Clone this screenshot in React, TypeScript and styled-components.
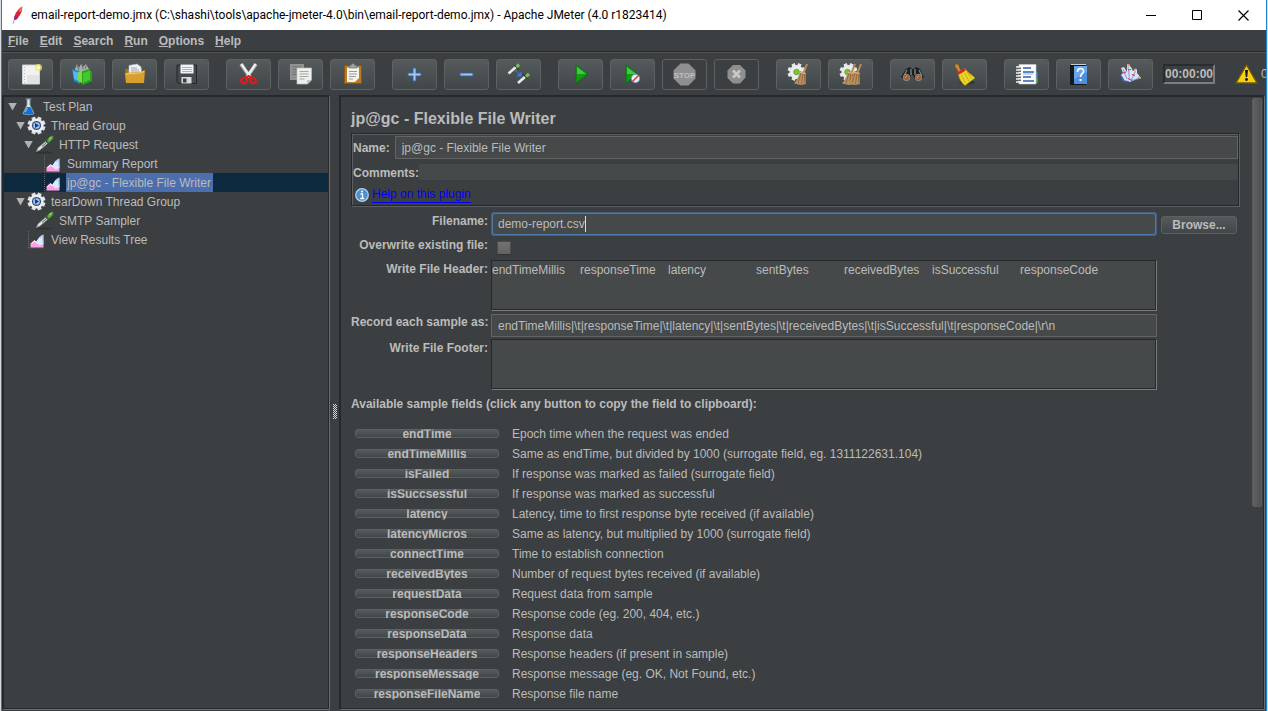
import React, { ReactNode } from 'react';
import styled, { createGlobalStyle, css } from 'styled-components';

const color = {
  panel: '#3c3f41',
  field: '#45494a',
  text: '#bbbbbb',
  dark: '#26292b',
  light: '#6b6e70',
  frame: '#1883d7',
};

const GlobalStyle = createGlobalStyle`
  * { box-sizing: border-box; }
  body {
    margin: 0;
    background: #d3dce2;
    color: ${color.text};
    font: 12px/16px "Liberation Sans", Arial, sans-serif;
  }
  button, input, textarea { font: inherit; color: inherit; margin: 0; padding: 0; }
`;

const Desktop = styled.div`
  height: 100vh;
  padding: 0 1px;
  display: flex;
`;

const AppWindow = styled.div`
  flex: 1;
  min-width: 0;
  display: flex;
  flex-direction: column;
  background: ${color.panel};
  border: solid ${color.frame};
  border-width: 0 1px;
`;

const TitleBar = styled.header`
  flex: none;
  height: 30px;
  padding-left: 8px;
  display: flex;
  align-items: center;
  background: #fff;
  color: #000;
`;

const WindowTitle = styled.h1`
  flex: 1;
  margin: 0 0 0 5px;
  font: 12px/20px Roboto, "Noto Sans", sans-serif;
  white-space: nowrap;
  overflow: hidden;
`;

const WindowButton = styled.button`
  width: 46px;
  height: 29px;
  border: 0;
  background: none;
  display: flex;
  align-items: center;
  justify-content: center;
`;

const MenuBar = styled.nav`
  flex: none;
  height: 22px;
  padding-left: 6px;
  display: flex;
  align-items: center;
  gap: 11px;
  border-bottom: 1px solid ${color.dark};
`;

const MenuItem = styled.button`
  border: 0;
  background: none;
  font-weight: bold;
`;

const ToolBar = styled.div`
  flex: none;
  height: 43px;
  padding: 0 0 0 6px;
  display: flex;
  align-items: center;
  gap: 17px;
  overflow: hidden;
  border-top: 1px solid #555;
`;

const ToolGroup = styled.div`
  flex: none;
  display: flex;
  gap: 7px;
`;

const raised = css`
  border: 1px solid #5e6162;
  background: linear-gradient(#555a5c, #414648);
`;

const ToolButton = styled.button`
  width: 45px;
  height: 31px;
  border-radius: 3px;
  display: flex;
  align-items: center;
  justify-content: center;
  ${raised}
  &:disabled { background: none; }
`;

const Timer = styled.output`
  flex: none;
  width: 52px;
  height: 20px;
  margin-left: -7px;
  border: 2px solid;
  border-color: #2a2c2e #7b7e80 #7b7e80 #2a2c2e;
  font-weight: bold;
  text-align: center;
`;

const LogCounter = styled.div`
  flex: none;
  margin-left: 3px;
  display: flex;
  align-items: center;
  gap: 3px;
`;

const Workspace = styled.div`
  flex: 1;
  min-height: 0;
  margin: 0 1px 1px 0;
  display: flex;
`;

const TreePane = styled.aside`
  flex: none;
  width: 328px;
  border: solid ${color.dark};
  border-width: 2px 0 0 2px;
  border-right: 1px solid ${color.light};
  border-bottom: 1px solid ${color.light};
  box-shadow: inset -1px -1px 0 ${color.dark};
  padding-right: 1px;
`;

const TreeRow = styled.div<{ $level: number; $selected?: boolean }>`
  height: 19px;
  padding-left: ${(p) => 4 + p.$level * 8}px;
  display: flex;
  align-items: center;
  background: ${(p) => (p.$selected ? '#0d293e' : 'none')};
`;

const Arrow = styled.span<{ $open?: boolean }>`
  width: 9px;
  height: 8px;
  margin-right: 2px;
  background: ${(p) => (p.$open ? '#afb1b3' : 'none')};
  clip-path: polygon(0 0, 100% 0, 50% 100%);
`;

const TreeIcon = styled.span`
  width: 20px;
  height: 19px;
  margin-right: 3px;
`;

const TreeLabel = styled.span<{ $selected?: boolean }>`
  height: 19px;
  line-height: 21px;
  padding: 0 2px 0 1px;
  background: ${(p) => (p.$selected ? '#4b6eaf' : 'none')};
`;

const Splitter = styled.div`
  flex: none;
  width: 9px;
  padding-top: 18px;
  display: flex;
  align-items: center;
  justify-content: center;
`;

const EditorPane = styled.main`
  flex: 1;
  min-width: 0;
  display: flex;
  border: solid ${color.dark};
  border-width: 2px 0 0 2px;
  border-right: 1px solid ${color.light};
  border-bottom: 1px solid ${color.light};
  box-shadow: inset -1px -1px 0 ${color.dark};
  overflow: hidden;
`;

const EditorBody = styled.div`
  flex: 1;
  min-width: 0;
  padding: 12px 12px 0 10px;
`;

const ScrollBar = styled.div`
  flex: none;
  width: 12px;
  padding-top: 1px;
`;

const ScrollThumb = styled.div`
  width: 10px;
  height: 67%;
  border-radius: 2px;
  border: 1px solid #5b5b5b;
  background: linear-gradient(90deg, #616161, #505050);
`;

const PaneTitle = styled.h2`
  margin: 0 0 4px;
  font-size: 16px;
  line-height: 20px;
`;

const Etched = styled.section`
  margin: 0 1px 6px 0;
  padding: 2px 0 2px 1px;
  border: 1px solid ${color.dark};
  box-shadow: 1px 1px 0 #5d6062, inset 1px 1px 0 #5d6062;
  display: flex;
  flex-direction: column;
`;

const NameRow = styled.div`
  display: flex;
  align-items: center;
  gap: 5px;
  margin-bottom: 5px;
`;

const CommentsRow = styled.div`
  height: 16px;
  display: flex;
  line-height: 18px;
  margin-bottom: 7px;
`;

const BoldLabel = styled.label`
  font-weight: bold;
`;

const TextInput = styled.input`
  flex: 1;
  align-self: end;
  min-width: 0;
  width: 100%;
  height: 23px;
  padding: 0 6px;
  border: 1px solid #646464;
  background: ${color.field};
`;

const FlatInput = styled.input`
  flex: 1;
  min-width: 0;
  height: 16px;
  border: 0;
  background: ${color.field};
`;

const HelpRow = styled.div`
  padding-left: 2px;
  display: flex;
  align-items: center;
  gap: 3px;
`;

const HelpLink = styled.a`
  color: #0000ff;
  line-height: 15px;
  text-decoration: none;
  border-bottom: 1px solid #0000ff;
`;

const Form = styled.form`
  display: grid;
  grid-template-columns: 137px 1fr 80px;
  grid-template-rows: 24px 20px 51px 24px 51px;
  gap: 2px 3px;
`;

const FormLabel = styled.label<{ $compact?: boolean }>`
  grid-column: 1;
  font-weight: bold;
  line-height: ${(p) => (p.$compact ? 15 : 19)}px;
  text-align: right;
  white-space: nowrap;
`;

const FocusedField = styled.div`
  height: 24px;
  padding-left: 5px;
  display: flex;
  align-items: center;
  border: 2px solid #4b7bab;
  border-radius: 4px;
  outline: 1px solid #41607f;
  outline-offset: -1px;
  background: ${color.field};
`;

const GrowingInput = styled.input`
  field-sizing: content;
  border: 0;
  outline: 0;
  background: none;
`;

const Caret = styled.span`
  width: 1px;
  height: 16px;
  background: #dcdcdc;
`;

const BrowseButton = styled.button`
  height: 18px;
  margin: 4px 3px 0 1px;
  border-radius: 3px;
  font-weight: bold;
  line-height: 14px;
  ${raised}
`;

const CheckBox = styled.input`
  appearance: none;
  width: 14px;
  height: 14px;
  margin: 3px 0 3px 6px;
  border: 1px solid #4b4b4b;
  border-bottom-color: #2c2e30;
  border-radius: 1px;
  background: linear-gradient(#717171, #626262);
`;

const TextArea = styled.textarea`
  display: block;
  width: 100%;
  height: 51px;
  resize: none;
  overflow: hidden;
  line-height: 18px;
  tab-size: 88px;
  white-space: pre;
  border: 1px solid;
  border-color: ${color.dark} #7b7e80 #7b7e80 ${color.dark};
  box-shadow: inset -1px -1px 0 ${color.dark};
  background: ${color.field};
`;

const FieldsTitle = styled.h3`
  margin: 5px 0 10px;
  font-size: 12px;
  line-height: 18px;
`;

const FieldRow = styled.div`
  height: 20px;
  padding-left: 4px;
  display: flex;
  gap: 13px;
  line-height: 22px;
`;

const FieldButton = styled.button`
  flex: none;
  width: 144px;
  height: 9px;
  margin-top: 6px;
  border-radius: 3px;
  display: flex;
  align-items: center;
  justify-content: center;
  font-weight: bold;
  ${raised}
`;

const ClippedLabel = styled.span`
  line-height: 14px;
  clip-path: inset(3px 0 1px);
`;

const Icon = ({ children, size = 23 }: { children: ReactNode; size?: number }) => (
  <svg width={size} height={size} viewBox={`0 0 ${size} ${size}`} aria-hidden="true">
    {children}
  </svg>
);

const teeth = (cx: number, cy: number, r: number) =>
  Array.from({ length: 8 }, (_, i) => {
    const a = (i * Math.PI) / 4 + Math.PI / 8;
    return `M${cx} ${cy}L${(cx + r * Math.cos(a)).toFixed(2)} ${(cy + r * Math.sin(a)).toFixed(2)}`;
  }).join('');

const Gear = ({ cx, cy, r }: { cx: number; cy: number; r: number }) => (
  <g>
    <path d={teeth(cx, cy, r)} stroke="#e4e6e8" strokeWidth="3.600" />
    <circle cx={cx} cy={cy} r={r - 2} fill="#e9ebed" />
  </g>
);

const Brush = ({ x }: { x: number }) => (
  <g transform={`translate(${x} 0)`}>
    <path d="M20 1 16.5 10" stroke="#b98a55" strokeWidth="2" />
    <path d="m13 8 5.500 1.500L19 21l-5 1-7-1.500C10 17 12 13 13 8z" fill="#b8905f" />
    <path d="m14 10-3 10m5-10-1.500 11M17.500 10.500l.5 10" stroke="#8a6236" strokeWidth=".8" />
    <path d="m13 9.500 5.500 1" stroke="#e1bd88" />
  </g>
);

const Dropper = () => (
  <Icon size={19}>
    <ellipse cx="9" cy="17.500" rx="8" ry="1" fill="#2e3032" />
    <path d="M1.500 16.500 3 13l8-7 2 2-8 7z" fill="#dfe5e3" stroke="#8d9391" strokeWidth=".8" />
    <path d="m7 11.500 4.500-4" stroke="#5a605e" />
    <path d="m10 4.500 4.500 4.500" stroke="#2b5a23" strokeWidth="2" />
    <path d="M12 6c1-3 3.500-5.500 6-5 .8 2.500-1.500 4.500-4 6.500z" fill="#69a84b" stroke="#3f7a2c" strokeWidth=".7" />
    <path d="m14 4 2.500-2" stroke="#b6e09b" />
  </Icon>
);

const Chart = () => (
  <Icon size={19}>
    <path d="M1.500 1v17h15" fill="none" stroke="#66696b" strokeDasharray="1 1" />
    <path d="M3.500 17.500v-4l4-3.500 3 2.500 6-2v7z" fill="#ff9fe4" />
    <path d="m4.500 13.500 3-2.500 2.500 2" stroke="#fff" fill="none" />
    <path d="M8.500 12C11 11 11 6 16.500 4.500V14l-4 1.500z" fill="#dcecff" />
    <path d="M13 8c1-2 2-2.500 3-3v8" fill="none" stroke="#7fa4de" strokeWidth=".8" />
  </Icon>
);

const Cog = () => (
  <Icon size={19}>
    <path d={teeth(9.5, 9.5, 9)} stroke="#dfe2e4" strokeWidth="4" />
    <circle cx="9.500" cy="9.500" r="7" fill="#eceeef" />
    <circle cx="9.500" cy="9.500" r="4.600" fill="#2f4f83" />
    <circle cx="9.500" cy="9.500" r="3.300" fill="#a9c4ea" />
    <path d="m8 7 4 2.500L8 12z" fill="#173a7a" />
  </Icon>
);

const Flask = () => (
  <Icon size={19}>
    <path d="M6.500 2h6M8 2v6l-4 8.500c0 1.500 11 1.500 11 0L11 8V2z" fill="#dbe6ee" stroke="#8499a8" strokeWidth=".9" />
    <path d="M8 10h3.500l3 6.500c-1.500 1.200-8.500 1.200-10 0z" fill="#1273d6" />
    <path d="m8.500 11-2 4" stroke="#7bc2ff" />
  </Icon>
);

type Tool = { name: string; art: ReactNode; disabled?: boolean };

const toolGroups: Tool[][] = [
  [
    {
      name: 'New',
      art: (
        <>
          <path d="M3.500 2h17v19h-17z" fill="#f1f1f1" stroke="#cfcfcf" />
          <path d="M5.500 4v16" stroke="#b9b9b9" strokeDasharray="1 2" />
          <path d="M8 12h12v8H8z" fill="#e2e2e2" />
          <circle cx="19.500" cy="4.500" r="3.500" fill="#f0e56a" opacity=".8" />
          <circle cx="19.500" cy="4.500" r="1.800" fill="#fffcc0" />
        </>
      ),
    },
    {
      name: 'Templates',
      art: (
        <>
          <path d="m4 6 2-5 2 4 2-4 2 3 3-3 3 5-2 4H5z" fill="#a9adae" />
          <path d="m6 2 2 5m3-6 1 5m4-5-2 5" stroke="#6c7072" />
          <path d="m1 6 8 2v13l-6-3z" fill="#1d8ddb" />
          <path d="m2 8 6 2v8l-5-2z" fill="#54b9f5" />
          <path d="m9 9 9-3 3 3v9l-9 4-3-3z" fill="#25a51b" />
          <path d="m7 9 4-1.500V20l-4-2z" fill="#7ddc3d" />
          <path d="m12 10 7-2.500v9L12 20z" fill="#45c62b" />
        </>
      ),
    },
    {
      name: 'Open',
      art: (
        <>
          <path d="M2 6h7l2 2h10v12H3z" fill="#a8730c" />
          <path d="M6 2.500 14 1l4 3 1 10H6z" fill="#f4f4f6" stroke="#b8bcc4" strokeWidth=".7" />
          <path d="M8 5h6m-6 2h8m-8 2h9" stroke="#8e96a8" strokeWidth=".9" />
          <path d="m2 10 15-1 5-2-1 13H3z" fill="#d9a12b" />
          <path d="m3 11 14-1 4-1.500" fill="none" stroke="#f3cd70" />
        </>
      ),
    },
    {
      name: 'Save',
      art: (
        <>
          <path d="M2 2h19.500v18.500H4L2 19z" fill="#46494d" stroke="#24262a" />
          <path d="M5.500 1.500h13v9h-13z" fill="#eef5fa" />
          <path d="M7 4.500h10M7 6.500h10M7 8.500h10" stroke="#8fb4d6" strokeWidth=".9" />
          <path d="M6.500 14h10v6.500h-10z" fill="#dadada" />
          <path d="M8 15.500h3.500v4H8z" fill="#3a3d40" />
        </>
      ),
    },
  ],
  [
    {
      name: 'Cut',
      art: (
        <>
          <path d="m4 1 9 13M19 1l-9 13" stroke="#b5b9b9" strokeWidth="3.600" />
          <path d="m4.500 1 8 12M18.500 1l-8 12" stroke="#f3f4f4" strokeWidth="2" />
          <ellipse cx="7" cy="17.500" rx="3" ry="2.500" fill="none" stroke="#e01b1b" strokeWidth="2.200" transform="rotate(-35 7 17.500)" />
          <ellipse cx="16" cy="17.500" rx="3" ry="2.500" fill="none" stroke="#e01b1b" strokeWidth="2.200" transform="rotate(35 16 17.500)" />
          <path d="m8.500 15 3-2 3 2" stroke="#e01b1b" strokeWidth="2" fill="none" />
        </>
      ),
    },
    {
      name: 'Copy',
      art: (
        <>
          <path d="M1 1h14v16H1z" fill="#8f9291" />
          <path d="M3.500 4h9m-9 2.500h9m-9 2.500h9m-9 2.500h5" stroke="#6e7170" />
          <path d="M8 5h14.500v12l-4 4H8z" fill="#eeeeec" stroke="#bfbfba" strokeWidth=".7" />
          <path d="M10.500 8.500h9m-9 2.500h9m-9 2.500h9m-9 2.500h5" stroke="#a5a7a4" />
          <path d="M22 17h-4v4z" fill="#c3c5c1" />
        </>
      ),
    },
    {
      name: 'Paste',
      art: (
        <>
          <path d="M3.500 2.500h17v18h-17z" fill="#bd7a22" stroke="#8c5510" />
          <path d="M6 4.500h12V15l-4 4H6z" fill="#f2f2f0" />
          <path d="M8 8.500h8m-8 2.500h8m-8 2.500h7M8 16h4" stroke="#9a9c98" />
          <path d="M8 5V3l2-.5C10.500 0 13.500 0 14 2.500l2 .5v2z" fill="#a0a39f" stroke="#70736f" strokeWidth=".7" />
        </>
      ),
    },
  ],
  [
    {
      name: 'Expand All',
      art: (
        <>
          <path d="M11.500 4.500v14M4.500 11.500h14" stroke="#2f66b8" strokeWidth="3.600" />
          <path d="M11.500 5.500v12M5.500 11.500h12" stroke="#9dc8f3" strokeWidth="2" />
        </>
      ),
    },
    {
      name: 'Collapse All',
      art: (
        <>
          <path d="M4.500 11.500h14" stroke="#2f66b8" strokeWidth="3.600" />
          <path d="M5.500 11.500h12" stroke="#9dc8f3" strokeWidth="2" />
        </>
      ),
    },
    {
      name: 'Toggle',
      art: (
        <>
          <path d="m1.500 10.500 8-7" stroke="#e6eae8" strokeWidth="2.600" />
          <path d="m7.500 2 4 4" stroke="#1d3b18" strokeWidth="1.600" />
          <path d="m9.500 4 2.500-2.500" stroke="#7cb95e" strokeWidth="3.200" />
          <path d="m11 20 8-7" stroke="#e6eae8" strokeWidth="2.600" />
          <path d="m16.500 11.500 4 4" stroke="#1d3b18" strokeWidth="1.600" />
          <path d="m19 13.500 3-2.500" stroke="#7cb95e" strokeWidth="3.200" />
          <path d="m8.500 7.500 4 4" stroke="#2f7df0" strokeWidth="1.400" strokeDasharray="2 1" />
          <path d="M14.500 8.500v5h-5z" fill="#2f7df0" />
        </>
      ),
    },
  ],
  [
    {
      name: 'Start',
      art: (
        <>
          <path d="m7 2 12 9L7 20z" fill="#0f9d12" stroke="#0b6a0d" strokeWidth=".7" />
          <path d="m8 4 9 7H8z" fill="#4cc44a" />
        </>
      ),
    },
    {
      name: 'Start no pauses',
      art: (
        <>
          <path d="m5 2 12 9L5 20z" fill="#0f9d12" stroke="#0b6a0d" strokeWidth=".7" />
          <path d="m6 4 9 7H6z" fill="#4cc44a" />
          <circle cx="14.500" cy="15.500" r="4.200" fill="#e4eefa" stroke="#6e95c8" />
          <path d="m11.500 18.500 6-6" stroke="#e23b2e" strokeWidth="1.600" />
        </>
      ),
    },
    {
      name: 'Stop',
      disabled: true,
      art: (
        <>
          <path d="M7.500.5h8l7 7v8l-7 7h-8l-7-7v-8z" fill="#8f8f8f" />
          <text x="11.500" y="15" textAnchor="middle" fontSize="8" fontWeight="bold" fill="#c0c0c0">STOP</text>
        </>
      ),
    },
    {
      name: 'Shutdown',
      disabled: true,
      art: (
        <>
          <path d="M8 2h7l5.500 5.500v7L15 20.500H8L2.500 15V7.500z" fill="#8f8f8f" />
          <path d="m8 7.500 7 7m0-7-7 7" stroke="#c9c9c9" strokeWidth="2.600" />
        </>
      ),
    },
  ],
  [
    {
      name: 'Clear',
      art: (
        <>
          <Gear cx={9.5} cy={9} r={9} />
          <circle cx="9.500" cy="9" r="2.800" fill="#7ac62c" stroke="#4e8c16" strokeWidth=".6" />
          <Brush x={0} />
        </>
      ),
    },
    {
      name: 'Clear All',
      art: (
        <>
          <Gear cx={9.5} cy={9} r={9} />
          <circle cx="8.500" cy="9" r="2.800" fill="#7ac62c" stroke="#4e8c16" strokeWidth=".6" />
          <Brush x={-4} />
          <Brush x={2} />
        </>
      ),
    },
  ],
  [
    {
      name: 'Search',
      art: (
        <>
          <path d="M5 6 9 4l2 2h2l2-2 4 2 4 8-5 4-5-3-1-3h-2l-1 3-4 3-5-4z" fill="#1c1e20" />
          <path d="m6 7-3 6M10 6v6m4-6v6m4-5 3 6" stroke="#7d8285" strokeWidth="1.400" />
          <circle cx="5.500" cy="14.500" r="3.200" fill="#a25c35" stroke="#8c9194" />
          <circle cx="17.500" cy="14.500" r="3.200" fill="#a25c35" stroke="#8c9194" />
          <path d="m4 15 2-2m10 2 2-2" stroke="#dba27c" />
        </>
      ),
    },
    {
      name: 'Reset Search',
      art: (
        <>
          <ellipse cx="14" cy="19.500" rx="8" ry="2" fill="#33373a" />
          <path d="M2 2c1-2 4-1 4 1l2 5-2.500 1.500L3 5C2 4 1.500 3 2 2z" fill="#c58a35" stroke="#7e5212" strokeWidth=".6" />
          <path d="m5 9.500 7-4c3 4.500 7 6 10 9.500L12 22.500C7.500 19 6 15 5 9.500z" fill="#ecd629" stroke="#a58c0c" strokeWidth=".7" />
          <path d="m8.500 12 4 8m-1-10 4.500 8m-2-9 5 7" stroke="#bda013" strokeWidth=".8" />
          <path d="m4.500 9.500 7-4.200 1.200 2.200-7 4.200z" fill="#e12020" />
        </>
      ),
    },
  ],
  [
    {
      name: 'Function Helper',
      art: (
        <>
          <path d="M20 9h3v6h-3z" fill="#2d72dd" />
          <path d="M20 15h3v5h-3z" fill="#37a22d" />
          <path d="M4 1.500h17v19.500H4z" fill="#fdfdfd" stroke="#c7c9cb" strokeWidth=".6" />
          <path d="M8 5h8M8 9h11M8 14h8M8 18h11" stroke="#2c5eb0" strokeWidth="1.300" />
          <path d="M8 11h10" stroke="#a9c1e5" strokeWidth="1.300" />
          <path d="M1 4h5M1 7h5M1 10h5M1 13h5M1 16h5M1 19h5" stroke="#f2f2f2" strokeWidth="1.300" />
          <path d="M4 5.200h2m-2 3h2m-2 3h2m-2 3h2m-2 3h2" stroke="#222" />
        </>
      ),
    },
    {
      name: 'Help',
      art: (
        <>
          <path d="M3 2h16v20H3z" fill="#15181c" />
          <path d="M7 3h13v18H7z" fill="#4e8fe0" />
          <path d="M7 3h13v6L7 16z" fill="#6aa6ee" />
          <path d="M4 1.500h15" stroke="#c9ccd0" />
          <path d="M10.500 9c0-4.500 6-4.500 6-.8 0 2.500-3 2.600-3 5.800" fill="none" stroke="#fff" strokeWidth="1.700" />
          <circle cx="13.500" cy="17" r="1.200" fill="#fff" />
        </>
      ),
    },
    {
      name: 'Undo',
      art: (
        <>
          <path d="m2 5 3-1 3 5 0-8 4 3 2 4 4-2 0 4 4 5-5 1-6 3-7-1-2-6 2-2z" fill="#d9e4fa" />
          <path d="m4 6 4 10m1-13 1.500 12m6-7-4 9m8-2-9 3" stroke="#8ba5e0" strokeWidth="1.100" />
          <path d="m4 10 3-1m2-2 3-.5m1 5 3 1m-7 3 4 2" stroke="#d03a4e" strokeWidth="1.200" />
          <path d="m8 2 3 0m8 12 3 1m-7-8 2-1" stroke="#f2a23c" strokeWidth="1.500" />
          <path d="m2 13 3 5 5 1" fill="none" stroke="#3a5fb5" strokeWidth="1.600" />
        </>
      ),
    },
  ],
];

const menus = ['File', 'Edit', 'Search', 'Run', 'Options', 'Help'];

const tree: { label: string; level: number; icon: ReactNode; open?: boolean; selected?: boolean }[] = [
  { label: 'Test Plan', level: 0, icon: <Flask />, open: true },
  { label: 'Thread Group', level: 1, icon: <Cog />, open: true },
  { label: 'HTTP Request', level: 2, icon: <Dropper />, open: true },
  { label: 'Summary Report', level: 3, icon: <Chart /> },
  { label: 'jp@gc - Flexible File Writer', level: 3, icon: <Chart />, selected: true },
  { label: 'tearDown Thread Group', level: 1, icon: <Cog />, open: true },
  { label: 'SMTP Sampler', level: 2, icon: <Dropper /> },
  { label: 'View Results Tree', level: 1, icon: <Chart /> },
];

const sampleFields = [
  ['endTime', 'Epoch time when the request was ended'],
  ['endTimeMillis', 'Same as endTime, but divided by 1000 (surrogate field, eg. 1311122631.104)'],
  ['isFailed', 'If response was marked as failed (surrogate field)'],
  ['isSuccsessful', 'If response was marked as successful'],
  ['latency', 'Latency, time to first response byte received (if available)'],
  ['latencyMicros', 'Same as latency, but multiplied by 1000 (surrogate field)'],
  ['connectTime', 'Time to establish connection'],
  ['receivedBytes', 'Number of request bytes received (if available)'],
  ['requestData', 'Request data from sample'],
  ['responseCode', 'Response code (eg. 200, 404, etc.)'],
  ['responseData', 'Response data'],
  ['responseHeaders', 'Response headers (if present in sample)'],
  ['responseMessage', 'Response message (eg. OK, Not Found, etc.)'],
  ['responseFileName', 'Response file name'],
];

const fileHeader = [
  'endTimeMillis',
  'responseTime',
  'latency',
  'sentBytes',
  'receivedBytes',
  'isSuccessful',
  'responseCode',
].join('\t');

const recordFormat =
  'endTimeMillis|\\t|responseTime|\\t|latency|\\t|sentBytes|\\t|receivedBytes|\\t|isSuccessful|\\t|responseCode|\\r\\n';

export default function App() {
  return (
    <Desktop>
      <GlobalStyle />
      <AppWindow>
        <TitleBar>
          <svg width="16" height="18" viewBox="0 0 16 18" aria-hidden="true">
            <path d="M8 4c2-3 4-4 4.500-3.500L10 9z" fill="#f0902c" />
            <path d="M12 1c.8 3-1 7-5 12l-3 1c0-3 1-7 4-10z" fill="#d4233f" />
            <path d="M12 1c-1 1-2.500 2-3.500 4l2.500 1c1-2 1.300-4 1-5z" fill="#f07a2a" />
            <path d="M4.500 10 8 11.500 6.500 13.500 4 14z" fill="#8d2a87" />
            <path d="m4 14.500-1 3" stroke="#5b2d74" strokeDasharray="1 1" />
          </svg>
          <WindowTitle>
            email-report-demo.jmx (C:\shashi\tools\apache-jmeter-4.0\bin\email-report-demo.jmx) - Apache JMeter (4.0 r1823414)
          </WindowTitle>
          <WindowButton aria-label="Minimize">
            <svg width="11" height="11"><path d="M0 5.500h10" stroke="#000" /></svg>
          </WindowButton>
          <WindowButton aria-label="Maximize">
            <svg width="11" height="11"><path d="M.5.5h9v9h-9z" fill="none" stroke="#000" /></svg>
          </WindowButton>
          <WindowButton aria-label="Close">
            <svg width="11" height="11"><path d="m.5.500 10 10m0-10-10 10" stroke="#000" strokeWidth="1.200" /></svg>
          </WindowButton>
        </TitleBar>

        <MenuBar>
          {menus.map((m) => (
            <MenuItem key={m}>
              <u>{m[0]}</u>
              {m.slice(1)}
            </MenuItem>
          ))}
        </MenuBar>

        <ToolBar role="toolbar">
          {toolGroups.map((group) => (
            <ToolGroup key={group[0].name}>
              {group.map((tool) => (
                <ToolButton key={tool.name} aria-label={tool.name} disabled={tool.disabled}>
                  <Icon>{tool.art}</Icon>
                </ToolButton>
              ))}
            </ToolGroup>
          ))}
          <Timer>00:00:00</Timer>
          <LogCounter>
            <svg width="23" height="20" viewBox="0 0 23 20" aria-hidden="true">
              <path d="M11.500 1 22 19H1z" fill="#f7cf12" stroke="#6f5b05" strokeWidth="1.300" strokeLinejoin="round" />
              <path d="M10 6h3l-.8 7h-1.400z" fill="#111" />
              <circle cx="11.500" cy="15.500" r="1.400" fill="#111" />
            </svg>
            <span>0</span>
          </LogCounter>
        </ToolBar>

        <Workspace>
          <TreePane role="tree">
            {tree.map((n) => (
              <TreeRow key={n.label} role="treeitem" $level={n.level} $selected={n.selected}>
                <Arrow $open={n.open} />
                <TreeIcon>{n.icon}</TreeIcon>
                <TreeLabel $selected={n.selected}>{n.label}</TreeLabel>
              </TreeRow>
            ))}
          </TreePane>

          <Splitter>
            <svg width="4" height="15" aria-hidden="true">
              <path d="M.5 0v15M2.500 0v15" stroke="#d5d5d5" strokeDasharray="1 1" />
              <path d="M1.500 1v14M3.500 1v14" stroke="#d5d5d5" strokeDasharray="1 1" />
            </svg>
          </Splitter>

          <EditorPane>
            <EditorBody>
              <PaneTitle>jp@gc - Flexible File Writer</PaneTitle>
              <Etched>
                <NameRow>
                  <BoldLabel htmlFor="name">Name:</BoldLabel>
                  <TextInput id="name" defaultValue="jp@gc - Flexible File Writer" />
                </NameRow>
                <CommentsRow>
                  <BoldLabel htmlFor="comments">Comments:</BoldLabel>
                  <FlatInput id="comments" />
                </CommentsRow>
                <HelpRow>
                  <svg width="14" height="14" viewBox="0 0 14 14" aria-hidden="true">
                    <circle cx="7" cy="7" r="6.300" fill="#4f8fd0" stroke="#b8d3ee" strokeWidth="1.200" />
                    <path d="M5.500 6H7.500v4.500M5.300 10.500h4" stroke="#fff" strokeWidth="1.300" fill="none" />
                    <circle cx="7" cy="3.600" r="1" fill="#fff" />
                  </svg>
                  <HelpLink href="#help">Help on this plugin</HelpLink>
                </HelpRow>
              </Etched>

              <Form>
                <FormLabel htmlFor="filename">Filename:</FormLabel>
                <FocusedField>
                  <GrowingInput id="filename" defaultValue="demo-report.csv" />
                  <Caret />
                </FocusedField>
                <BrowseButton type="button">Browse...</BrowseButton>

                <FormLabel htmlFor="overwrite" $compact>Overwrite existing file:</FormLabel>
                <CheckBox id="overwrite" type="checkbox" />

                <FormLabel htmlFor="header">Write File Header:</FormLabel>
                <TextArea id="header" defaultValue={fileHeader} />

                <FormLabel htmlFor="record">Record each sample as:</FormLabel>
                <TextInput id="record" defaultValue={recordFormat} />

                <FormLabel htmlFor="footer">Write File Footer:</FormLabel>
                <TextArea id="footer" />
              </Form>

              <FieldsTitle>Available sample fields (click any button to copy the field to clipboard):</FieldsTitle>
              {sampleFields.map(([name, description]) => (
                <FieldRow key={name}>
                  <FieldButton>
                    <ClippedLabel>{name}</ClippedLabel>
                  </FieldButton>
                  <span>{description}</span>
                </FieldRow>
              ))}
            </EditorBody>
            <ScrollBar>
              <ScrollThumb />
            </ScrollBar>
          </EditorPane>
        </Workspace>
      </AppWindow>
    </Desktop>
  );
}
